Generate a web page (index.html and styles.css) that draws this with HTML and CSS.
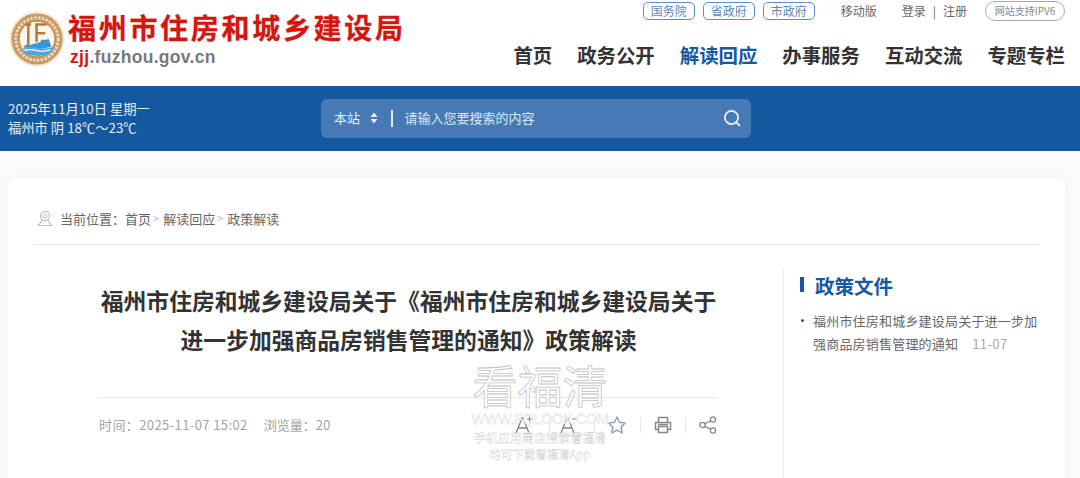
FILE: index.html
```html
<!DOCTYPE html>
<html lang="zh-CN">
<head>
  <meta charset="UTF-8" />
  <title>福州市住房和城乡建设局</title>
  <link rel="stylesheet" href="styles.css">
</head>
<body>
  <!-- Header -->
  <div class="header">
    <div class="logo">
      <svg class="logo-mark" width="56" height="56" viewBox="0 0 58 58">
        <circle cx="29" cy="29" r="28.500" fill="#f3e8d8"/>
        <circle cx="29" cy="29" r="26.500" fill="#c99a64"/>
        <circle cx="29" cy="29" r="22" fill="none" stroke="#ecdcc4" stroke-width="3" stroke-dasharray="2.500 1.500"/>
        <circle cx="29" cy="29" r="18.500" fill="#fbf7ef" stroke="#b98445" stroke-width="1"/>
        <path d="M17 14h6M20 14v20q0 3-4 3M27 14h12M28.500 14v18M28.500 23h9M33 31h7v6" fill="none" stroke="#b07c3e" stroke-width="2.600"/>
        <path d="M14 37l16-4 11-4 3 8-14 3z" fill="#2f9ad6"/>
        <path d="M12 40q9-4 17-2t18-1q-2 6-7 8-10 3-21 0-5-2-7-5z" fill="#4aa9e0"/>
        <path d="M15 41q8-2 14 0t14-1" fill="none" stroke="#fff" stroke-width="1.300"/>
      </svg>
      <div class="logo-text">
        <div class="logo-title">福州市住房和城乡建设局</div>
        <div class="logo-url"><span class="red">zjj</span>.fuzhou.gov.cn</div>
      </div>
    </div>

    <div class="header-right">
      <div class="top-links">
        <a class="gov-btn">国务院</a>
        <a class="gov-btn">省政府</a>
        <a class="gov-btn">市政府</a>
        <a class="top-link mobile">移动版</a>
        <a class="top-link">登录</a>
        <span class="top-sep">|</span>
        <a class="top-link">注册</a>
        <span class="ipv6">网站支持IPV6</span>
      </div>
      <div class="nav">
        <a>首页</a>
        <a>政务公开</a>
        <a class="active">解读回应</a>
        <a>办事服务</a>
        <a>互动交流</a>
        <a>专题专栏</a>
      </div>
    </div>
  </div>

  <!-- Blue band -->
  <div class="band">
    <div class="date">
      <div>2025年11月10日 星期一</div>
      <div>福州市 阴 18℃～23℃</div>
    </div>
    <div class="search">
      <span class="scope">本站</span>
      <svg class="updown" width="8" height="12" viewBox="0 0 8 12">
        <path d="M4 .5l3.500 4.500H.5zM4 11.500L.5 7h7z" fill="#e6eef7"/>
      </svg>
      <span class="search-sep"></span>
      <span class="placeholder">请输入您要搜索的内容</span>
      <svg class="search-icon" width="18" height="18" viewBox="0 0 18 18">
        <circle cx="8.500" cy="8.500" r="6.600" fill="none" stroke="#eef4fa" stroke-width="1.800"/>
        <path d="M13.400 13.400l3 3" stroke="#eef4fa" stroke-width="1.800" stroke-linecap="round"/>
      </svg>
    </div>
  </div>

  <!-- Content card -->
  <div class="page">
    <div class="card">
      <div class="crumbs">
        <svg width="16" height="17" viewBox="0 0 16 17">
          <circle cx="8" cy="6" r="4.600" fill="none" stroke="#bbb" stroke-width="1.100"/>
          <circle cx="8" cy="6" r="1.800" fill="none" stroke="#bbb" stroke-width="1"/>
          <path d="M5 10.500L1.500 15.500h13L11 10.500" fill="none" stroke="#bbb" stroke-width="1.100"/>
        </svg>
        <span class="crumb-label">当前位置：</span>
        <a>首页</a><span class="gt">&gt;</span>
        <a>解读回应</a><span class="gt">&gt;</span>
        <a>政策解读</a>
      </div>

      <div class="columns">
        <div class="article">
          <h1>福州市住房和城乡建设局关于《福州市住房和城乡建设局关于<br>进一步加强商品房销售管理的通知》政策解读</h1>
          <div class="meta">
            <div class="meta-info">
              <span class="meta-time">时间：2025-11-07 15:02</span>
              <span>浏览量：20</span>
            </div>
            <div class="tools">
              <svg class="tool" width="20" height="20" viewBox="2 0 20 20">
                <path d="M3 18L9 3h1l6 15M5.500 13h9" fill="none" stroke="#888" stroke-width="1.400"/>
                <path d="M14 4h5M16.500 1.500v5" stroke="#888" stroke-width="1"/>
              </svg>
              <span class="tool-sep sep-a"></span>
              <svg class="tool" width="20" height="20" viewBox="2 0 20 20">
                <path d="M3 18L9 3h1l6 15M5.500 13h9" fill="none" stroke="#888" stroke-width="1.400"/>
                <path d="M14 4h5" stroke="#888" stroke-width="1"/>
              </svg>
              <span class="tool-sep sep-b"></span>
              <svg class="tool" width="20" height="20" viewBox="1 0 20 20">
                <path d="M10 2l2.500 5.300 5.700.8-4.100 4.100 1 5.800-5.100-2.800-5.100 2.800 1-5.800L1.800 8.100l5.700-.8z" fill="none" stroke="#8a9bb0" stroke-width="1.400" stroke-linejoin="round"/>
              </svg>
              <span class="tool-sep"></span>
              <svg class="tool" width="20" height="20" viewBox="0 0 20 20">
                <path d="M5.500 7V2.500h9V7M5 14.500H2.500V7.500h15v7H15" fill="none" stroke="#888" stroke-width="1.500"/>
                <path d="M5.500 11.500h9v6h-9zM5 9.500h10" fill="none" stroke="#888" stroke-width="1.500"/>
              </svg>
              <span class="tool-sep"></span>
              <svg class="tool" width="20" height="20" viewBox="0 0 20 20">
                <circle cx="4.500" cy="10" r="2.600" fill="none" stroke="#888" stroke-width="1.300"/>
                <circle cx="15" cy="4.500" r="2.600" fill="none" stroke="#888" stroke-width="1.300"/>
                <circle cx="15" cy="15.500" r="2.600" fill="none" stroke="#888" stroke-width="1.300"/>
                <path d="M6.800 8.800l6-3.200M6.800 11.200l6 3.200" stroke="#888" stroke-width="1.300"/>
              </svg>
            </div>
          </div>
        </div>

        <div class="side">
          <h2>政策文件</h2>
          <ul class="side-list">
            <li>福州市住房和城乡建设局关于进一步加强商品房销售管理的通知<span class="side-date">11-07</span></li>
          </ul>
        </div>
      </div>
    </div>
  </div>

  <!-- Watermark -->
  <div class="watermark">
    <div class="wm-big">看福清</div>
    <div class="wm-site">WWW.FQLOOK.COM</div>
    <div class="wm-line">手机应用商店搜索看福清</div>
    <div class="wm-line wm-small">均可下载看福清App</div>
  </div>
</body>
</html>
```

FILE: styles.css
```css
:root {
  --blue: #14589f;
  --text: #333;
  --cjk: "Noto Sans CJK SC", "Noto Sans", sans-serif;
}

* { margin: 0; padding: 0; box-sizing: border-box; }
html, body { height: 100%; overflow: hidden; }

body {
  font-family: var(--cjk);
  background: #fafafa;
  color: var(--text);
}

/* Header */
.header {
  height: 86px;
  background: #fff;
  display: flex;
  justify-content: space-between;
  padding: 0 15px 0 9px;
}
.logo { display: flex; align-items: flex-start; padding-top: 11px; }
.logo-mark { flex-shrink: 0; }
.logo-text { margin: 0 0 0 3px; }
.logo-title {
  font-family: "Noto Sans CJK SC", serif;
  font-weight: 700;
  font-size: 28px;
  line-height: 32px;
  letter-spacing: 2.700px;
  color: #d3170f;
  -webkit-text-stroke: .3px #d3170f;
  white-space: nowrap;
}
.logo-url {
  font-family: "Liberation Sans", sans-serif;
  font-weight: 700;
  font-size: 17.500px;
  line-height: 20px;
  margin: 4px 0 0 2px;
  letter-spacing: .3px;
  color: #77797b;
}
.red { color: #d3170f; }

.header-right { display: flex; flex-direction: column; align-items: flex-end; }
.top-links {
  display: flex;
  align-items: center;
  height: 20px;
  margin-top: 1px;
  font-size: 12px;
  color: #666;
}
.gov-btn {
  width: 52px;
  height: 18px;
  margin-right: 8px;
  border: 1px solid #5b8fc9;
  border-radius: 5px;
  text-align: center;
  line-height: 15px;
  color: #5e88b4;
}
.top-link { line-height: 18px; }
.mobile { margin: 0 25px 0 18px; }
.top-sep { margin: 0 7px; line-height: 16px; }
.ipv6 {
  margin-left: 18px;
  width: 80px;
  height: 20px;
  border: 1px solid #aaa;
  border-radius: 10px;
  text-align: center;
  line-height: 18px;
  font-size: 10px;
  color: #888;
  white-space: nowrap;
}

.nav {
  display: flex;
  gap: 25px;
  margin-top: 21px;
  font-size: 19.400px;
  font-weight: 700;
  line-height: 26px;
  color: #333;
}
.nav .active { color: var(--blue); }

/* Blue band */
.band {
  height: 65px;
  background: var(--blue);
  display: flex;
  align-items: center;
  padding-left: 8px;
  color: #e8eff7;
}
.date { width: 313px; font-size: 13.300px; line-height: 18.500px; white-space: nowrap; }
.search {
  width: 430px;
  height: 39px;
  margin-top: -1px;
  background: #4779b4;
  border-radius: 6px;
  display: flex;
  align-items: center;
  padding: 0 10px 0 13px;
  font-size: 13px;
}
.scope, .placeholder { position: relative; top: -1px; }
.updown { margin-left: 10px; }
.search-sep { width: 1.500px; height: 17px; background: #e6eef7; margin: 0 12px 0 13px; }
.placeholder { flex: 1; color: #dfe9f4; }

/* Card */
.page { padding: 27px 15px 0 8px; }
.card {
  height: 300px;
  background: #fff;
  border-radius: 10px 10px 0 0;
  box-shadow: 0 0 8px rgba(0,0,0,.04);
  padding: 0 26px;
  display: flex;
  flex-direction: column;
}
.crumbs {
  height: 67px;
  flex-shrink: 0;
  padding-top: 14px;
  display: flex;
  align-items: center;
  font-size: 13px;
  color: #666;
  border-bottom: 1px solid #e8e8e8;
}
.crumbs svg { margin: 0 7px 0 3px; }
.gt { color: #bbb; font-size: 11px; margin: 0 4px 0 2px; }

.columns { display: flex; flex: 1; margin-top: 23px; }
.article { width: 749px; padding: 13px 65px 0 65px; }
.article h1 {
  font-size: 22.800px;
  line-height: 39px;
  font-weight: 700;
  text-align: center;
  color: #333;
  white-space: nowrap;
}
.meta {
  margin-top: 38px;
  border-top: 1px solid #e8e8e8;
  height: 54px;
  display: flex;
  justify-content: space-between;
  align-items: center;
}
.meta-info { display: flex; gap: 16px; font-size: 13px; color: #a3a3a3; }
.meta-time { letter-spacing: .4px; }
.tools { display: flex; align-items: center; }
.tool { display: block; }
.tool-sep { width: 1px; height: 16px; background: #e6e6e6; margin: 0 12px; }
.tool-sep.sep-a { margin: 0 10px 0 14px; }
.tool-sep.sep-b { margin: 0 13px 0 14px; }

.side { flex: 1; border-left: 1px solid #eee; padding: 6px 0 0 16px; }
.side h2 {
  font-size: 19.500px;
  line-height: 24px;
  font-weight: 700;
  color: var(--blue);
  padding-left: 15px;
  position: relative;
}
.side h2::before {
  content: "";
  position: absolute;
  left: 0;
  top: 3px;
  width: 4px;
  height: 15px;
  background: var(--blue);
}
.side-list { list-style: none; margin-top: 11px; }
.side-list li {
  position: relative;
  padding-left: 13px;
  font-size: 13px;
  letter-spacing: .2px;
  line-height: 23px;
  color: #666;
}
.side-list li::before {
  content: "";
  position: absolute;
  left: 1px;
  top: 10px;
  width: 3px;
  height: 3px;
  border-radius: 50%;
  background: var(--blue);
}
.side-date { margin-left: 14px; color: #aaa; letter-spacing: .4px; }

/* Watermark sits over the article */
.watermark {
  position: absolute;
  left: 440px;
  top: 359px;
  width: 200px;
  text-align: center;
  color: #fff;
  -webkit-text-stroke: .3px #c8c8c8;
  line-height: 1;
  white-space: nowrap;
}
.wm-big { font-size: 45px; line-height: 52px; -webkit-text-stroke: .8px #c4c4c4; }
.wm-site { font-family: "Liberation Sans", sans-serif; font-size: 14.500px; letter-spacing: -.4px; line-height: 17px; }
.wm-line { font-size: 12px; line-height: 16px; margin-top: 2px; }
.wm-small { font-size: 11.400px; margin-top: 0; }
```
